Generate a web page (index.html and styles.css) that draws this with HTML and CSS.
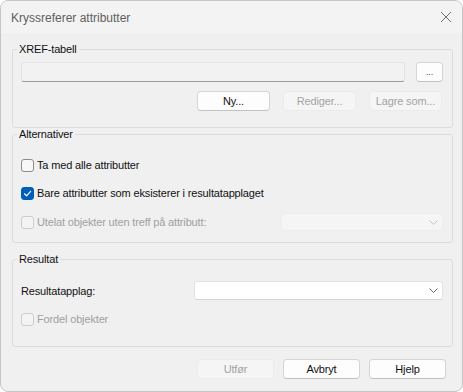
FILE: index.html
```html
<!DOCTYPE html>
<html>
<head>
<meta charset="utf-8">
<link rel="stylesheet" href="styles.css">
</head>
<body>
<div class="window">
  <div class="titlebar">
    <span class="title">Kryssreferer attributter</span>
    <svg class="close" width="12" height="12" viewBox="0 0 12 12"><path d="M1 1L11 11M11 1L1 11" stroke="#707070" stroke-width="1" fill="none"/></svg>
  </div>
  <div class="content">
    <fieldset class="group group-xref">
      <legend>XREF-tabell</legend>
      <div class="group-body xref-body">
        <div class="row-field">
          <div class="textfield"></div>
          <button class="btn btn-browse">...</button>
        </div>
        <div class="row-buttons">
          <button class="btn">Ny...</button>
          <button class="btn" disabled>Rediger...</button>
          <button class="btn" disabled>Lagre som...</button>
        </div>
      </div>
    </fieldset>

    <fieldset class="group group-alt">
      <legend>Alternativer</legend>
      <div class="group-body alt-body">
        <label class="check-row">
          <span class="checkbox"></span>
          <span class="check-label">Ta med alle attributter</span>
        </label>
        <label class="check-row">
          <span class="checkbox checked"><svg width="13" height="13" viewBox="0 0 13 13"><path d="M3.5 6.8L5.6 8.8L9.6 4.4" stroke="#fff" stroke-width="1.2" fill="none" stroke-linecap="round" stroke-linejoin="round"/></svg></span>
          <span class="check-label">Bare attributter som eksisterer i resultatapplaget</span>
        </label>
        <div class="check-row row-last disabled">
          <span class="checkbox"></span>
          <span class="check-label">Utelat objekter uten treff på attributt:</span>
          <div class="combo combo-disabled combo-small">
            <svg class="chevron" width="9" height="5" viewBox="0 0 9 5"><path d="M0.5 0.5L4.5 4.5L8.5 0.5" stroke="#c4c4c4" stroke-width="1" fill="none"/></svg>
          </div>
        </div>
      </div>
    </fieldset>

    <fieldset class="group group-res">
      <legend>Resultat</legend>
      <div class="group-body res-body">
        <div class="field-row">
          <span class="field-label">Resultatapplag:</span>
          <div class="combo combo-wide">
            <svg class="chevron" width="9" height="5" viewBox="0 0 9 5"><path d="M0.5 0.5L4.5 4.5L8.5 0.5" stroke="#6a6a6a" stroke-width="1" fill="none"/></svg>
          </div>
        </div>
        <div class="check-row disabled">
          <span class="checkbox"></span>
          <span class="check-label">Fordel objekter</span>
        </div>
      </div>
    </fieldset>

    <div class="dialog-buttons">
      <button class="btn btn-dlg" disabled>Utfør</button>
      <button class="btn btn-dlg">Avbryt</button>
      <button class="btn btn-dlg">Hjelp</button>
    </div>
  </div>
</div>
</body>
</html>
```

FILE: styles.css
```css
* {
  box-sizing: border-box;
}

html, body {
  margin: 0;
  padding: 0;
  background: #ffffff;
}

body {
  font-family: "Liberation Sans", Arial, sans-serif;
  font-size: 11px;
  letter-spacing: -0.15px;
  color: #111;
}

.window {
  width: 463px;
  height: 392px;
  border: 1px solid #c6c6c6;
  border-radius: 8px;
  background: #f0f0f0;
  overflow: hidden;
  display: flex;
  flex-direction: column;
}

.titlebar {
  height: 32px;
  flex: none;
  background: #f3f3f3;
  display: flex;
  align-items: center;
  justify-content: space-between;
  padding: 0 10px 0 10px;
}

.title {
  font-size: 12px;
  letter-spacing: 0;
  color: #5f5f5f;
  line-height: 16px;
  padding-top: 1px;
}

.close {
  display: block;
}

.content {
  padding: 0 9px 0 11px;
  display: flex;
  flex-direction: column;
}

.group {
  margin: 0;
  padding: 0;
  border: 1px solid #dcdcdc;
  border-radius: 3px;
  min-inline-size: 0;
}

.group legend {
  margin-left: 4px;
  padding: 0 2px;
  line-height: 13px;
  font-size: 11px;
}

.group-xref {
  margin-top: 10px;
}

.group-alt {
  margin-top: 0;
}

.group-res {
  margin-top: 10px;
}

.xref-body {
  padding: 6px 9px 16px 8px;
  display: flex;
  flex-direction: column;
  gap: 9px;
}

.row-field {
  display: flex;
  gap: 11px;
}

.textfield {
  flex: 1;
  height: 20px;
  background: #f2f2f2;
  border: 1px solid #e4e4e4;
  border-bottom: 1px solid #9a9a9a;
  border-radius: 3px;
}

.btn {
  font-family: "Liberation Sans", Arial, sans-serif;
  font-size: 11px;
  letter-spacing: -0.15px;
  color: #111;
  background: #fdfdfd;
  border: 1px solid #d5d5d5;
  border-bottom-color: #c2c2c2;
  border-radius: 4px;
  height: 20px;
  padding: 0;
  margin: 0;
  line-height: 18px;
}

.btn:disabled {
  background: #f5f5f5;
  border-color: #ebebeb;
  color: #a3a3a3;
}

.btn-browse {
  width: 27px;
  font-size: 9px;
  color: #444;
}

.row-buttons {
  display: flex;
  justify-content: flex-end;
  gap: 13px;
  padding-right: 1px;
}

.row-buttons .btn {
  width: 73px;
}

.alt-body {
  padding: 14px 9px 10px 8px;
  display: flex;
  flex-direction: column;
  gap: 8px;
}

.check-row {
  display: flex;
  align-items: center;
  height: 20px;
}

.row-last {
  margin-top: 1px;
}

.checkbox {
  width: 13px;
  height: 13px;
  flex: none;
  border: 1px solid #8b8b8b;
  border-radius: 3px;
  background: #f7f7f7;
  margin-right: 3px;
  position: relative;
}

.checkbox.checked {
  background: #005fb8;
  border-color: #005fb8;
}

.checkbox.checked svg {
  position: absolute;
  left: -1px;
  top: -1px;
}

.disabled .checkbox {
  border-color: #cdcdcd;
  background: #f3f3f3;
}

.disabled .check-label {
  color: #a0a0a0;
}

.combo {
  height: 18px;
  border-radius: 3px;
  margin-left: auto;
  display: flex;
  align-items: center;
  justify-content: flex-end;
  padding-right: 4px;
}

.combo-disabled {
  background: #f5f5f5;
  border: 1px solid #ececec;
}

.combo-small {
  width: 162px;
}

.combo-wide {
  width: 249px;
  height: 19px;
  background: #ffffff;
  border: 1px solid #e3e3e3;
  border-bottom-color: #d4d4d4;
}

.chevron {
  display: block;
}

.res-body {
  padding: 15px 9px 17px 8px;
  display: flex;
  flex-direction: column;
  gap: 9px;
}

.field-row {
  display: flex;
  align-items: center;
}

.dialog-buttons {
  display: flex;
  justify-content: flex-end;
  gap: 9px;
  margin-top: 12px;
  padding-right: 7px;
}

.btn-dlg {
  width: 77px;
}
```
